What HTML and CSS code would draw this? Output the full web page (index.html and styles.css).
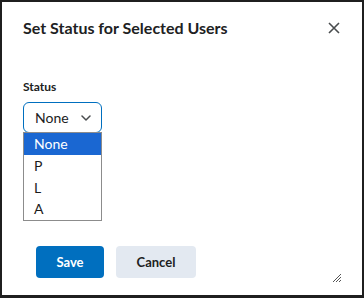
FILE: index.html
```html
<!DOCTYPE html>
<html>
<head>
<meta charset="utf-8">
<link rel="stylesheet" href="styles.css">
</head>
<body>
<div class="dialog">
  <div class="header">
    <h1 class="title">Set Status for Selected Users</h1>
    <svg class="close" width="12" height="12" viewBox="0 0 12 12"><path d="M1 1L11 11M11 1L1 11" stroke="#494c4e" stroke-width="1.6" fill="none"/></svg>
  </div>
  <div class="body">
    <div class="label">Status</div>
    <div class="select-wrap">
      <div class="select">
        <span>None</span>
        <svg width="10" height="6" viewBox="0 0 10 6"><path d="M1 1L5 5L9 1" stroke="#494c4e" stroke-width="1.5" fill="none" stroke-linecap="round" stroke-linejoin="round"/></svg>
      </div>
      <ul class="options">
        <li class="opt selected">None</li>
        <li class="opt">P</li>
        <li class="opt">L</li>
        <li class="opt">A</li>
      </ul>
    </div>
  </div>
  <div class="footer">
    <button class="btn primary">Save</button>
    <button class="btn secondary">Cancel</button>
    <svg class="grip" width="10" height="10" viewBox="0 0 10 10"><path d="M9 1L1 9M9 4L4 9M9 7L7 9" stroke="#555" stroke-width="1" fill="none"/></svg>
  </div>
</div>
</body>
</html>
```
FILE: styles.css
```css
* { box-sizing: border-box; }
html, body { margin: 0; padding: 0; background: #fff; }
body { font-family: Lato, "Open Sans", sans-serif; color: #202122; }
.dialog {
  width: 364px;
  height: 298px;
  border: 2px solid #1f1f1f;
  border-bottom-width: 3px;
  display: flex;
  flex-direction: column;
  position: relative;
  background: #fff;
}
.header {
  display: flex;
  justify-content: space-between;
  align-items: center;
  padding: 13px 22px 0 21px;
  height: 38px;
}
.title {
  margin: 0;
  font-size: 16px;
  font-weight: 700;
  line-height: 22px;
  color: #202122;
}
.close { display: block; }
.body {
  padding: 40px 0 0 21px;
  flex: 1;
}
.label {
  font-size: 12px;
  font-weight: 700;
  line-height: 14px;
  color: #202122;
}
.select-wrap {
  position: relative;
  margin-top: 8px;
  width: 79px;
}
.select {
  height: 31px;
  border: 1px solid #006fbf;
  border-radius: 6px;
  display: flex;
  align-items: center;
  justify-content: space-between;
  padding: 0 10px 0 11px;
  font-size: 14px;
  color: #202122;
}
.options {
  position: absolute;
  left: 0;
  top: 30px;
  width: 79px;
  margin: 0;
  padding: 0;
  list-style: none;
  border: 1px solid #8c8c8c;
  background: #fff;
}
.opt {
  height: 21.5px;
  line-height: 21.5px;
  padding-left: 10px;
  font-size: 14px;
  color: #1b1b1b;
}
.opt.selected { background: #1a67d2; color: #fff; height: 22px; }
.footer {
  display: flex;
  align-items: center;
  gap: 12px;
  padding: 0 0 17px 34px;
  position: relative;
}
.btn {
  height: 32px;
  border: none;
  border-radius: 4px;
  font-family: Lato, sans-serif;
  font-size: 13px;
  font-weight: 700;
}
.primary { width: 68px; background: #006fbf; color: #fff; }
.secondary { width: 80px; background: #e3e9f1; color: #202122; }
.grip { position: absolute; right: 20px; bottom: 12px; }
```
